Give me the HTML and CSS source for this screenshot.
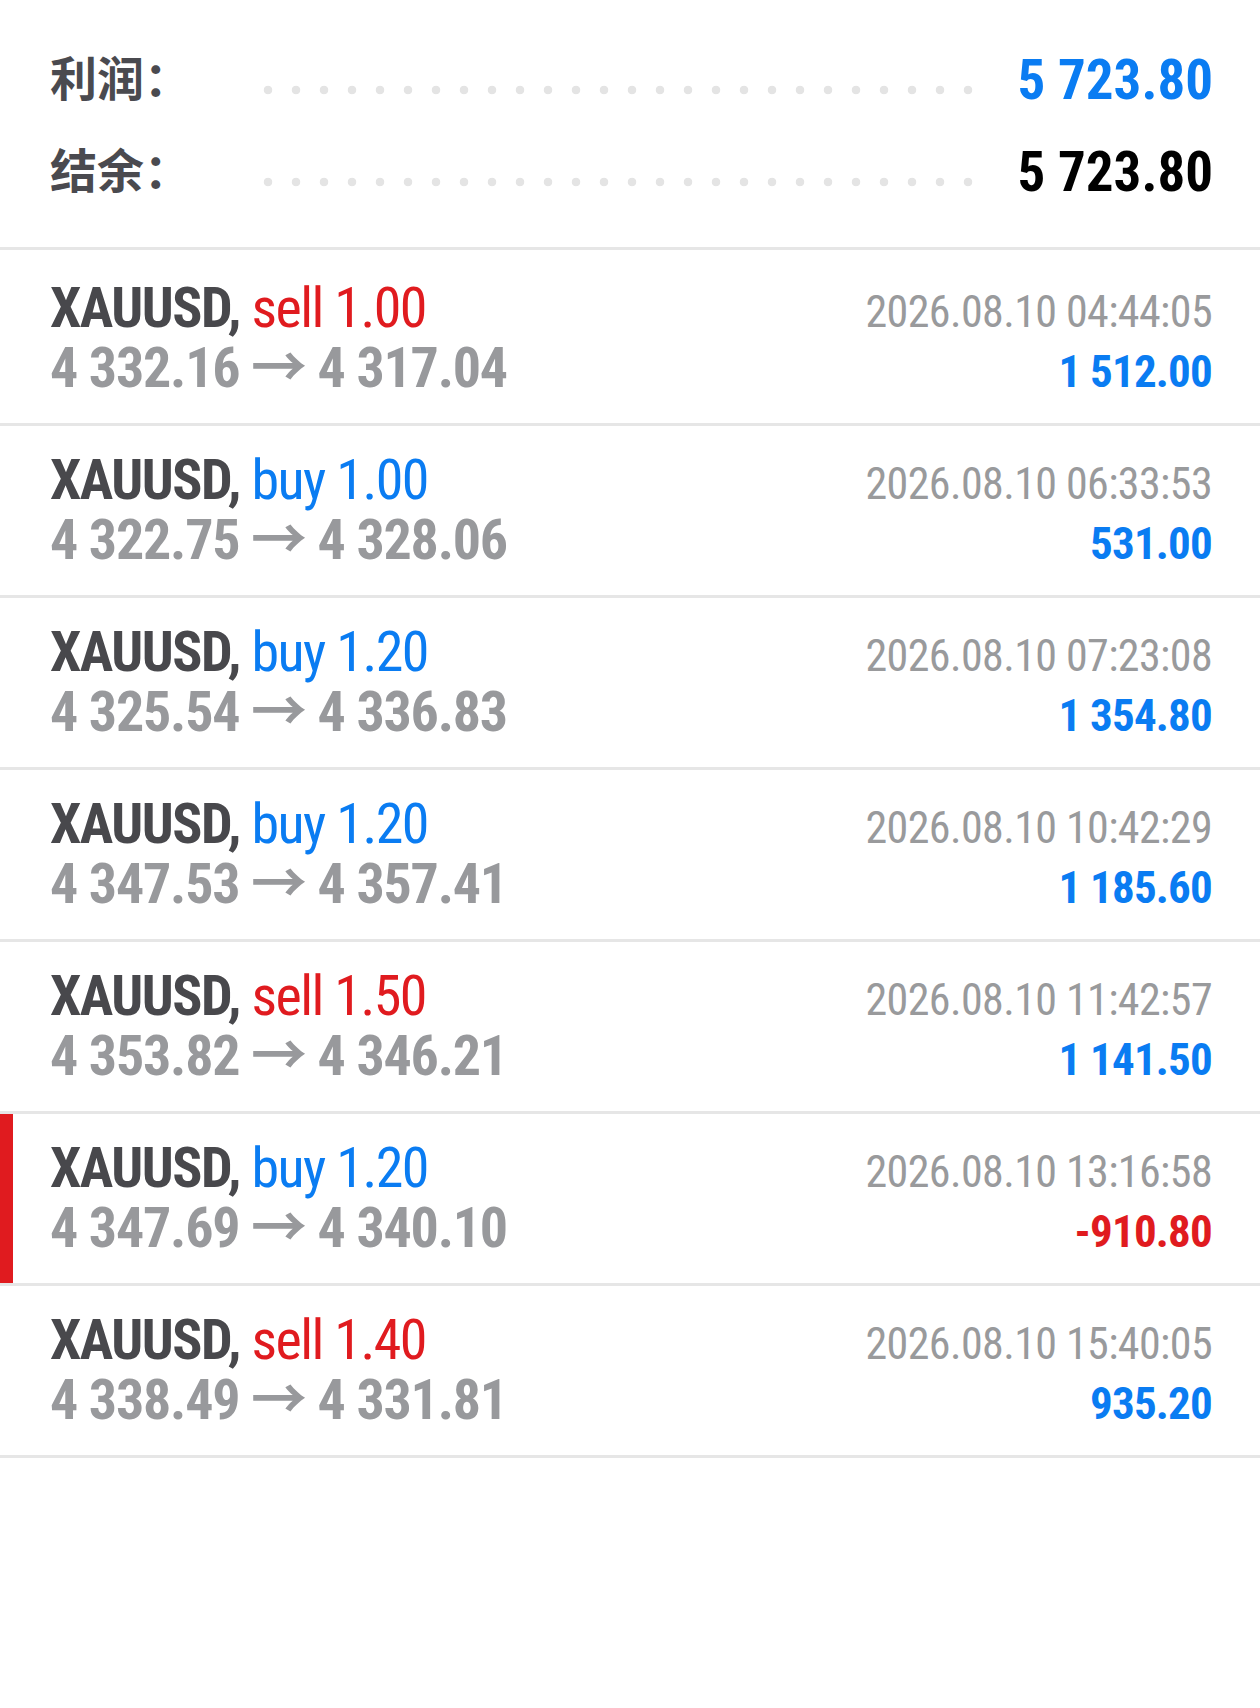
FILE: index.html
```html
<!DOCTYPE html>
<html lang="zh-CN">
<head>
<meta charset="UTF-8" />
<meta name="viewport" content="width=device-width, initial-scale=1.0" />
<title>历史</title>
<link rel="stylesheet" href="styles.css">
</head>
<body>

<!-- Итоги -->
<section class="summary">
  <div class="sum-row">
    <span class="sum-label">利润：</span>
    <span class="sum-dots"></span>
    <span class="sum-value blue">5 723.80</span>
  </div>
  <div class="sum-row">
    <span class="sum-label">结余：</span>
    <span class="sum-dots"></span>
    <span class="sum-value">5 723.80</span>
  </div>
</section>

<!-- Сделки -->
<ul class="deals">
  <li class="deal">
    <div class="deal-line">
      <span class="deal-title">XAUUSD, <span class="sell">sell 1.00</span></span>
      <span class="deal-time">2026.08.10 04:44:05</span>
    </div>
    <div class="deal-line">
      <span class="deal-prices">4 332.16 → 4 317.04</span>
      <span class="deal-profit blue">1 512.00</span>
    </div>
  </li>
  <li class="deal">
    <div class="deal-line">
      <span class="deal-title">XAUUSD, <span class="buy">buy 1.00</span></span>
      <span class="deal-time">2026.08.10 06:33:53</span>
    </div>
    <div class="deal-line">
      <span class="deal-prices">4 322.75 → 4 328.06</span>
      <span class="deal-profit blue">531.00</span>
    </div>
  </li>
  <li class="deal">
    <div class="deal-line">
      <span class="deal-title">XAUUSD, <span class="buy">buy 1.20</span></span>
      <span class="deal-time">2026.08.10 07:23:08</span>
    </div>
    <div class="deal-line">
      <span class="deal-prices">4 325.54 → 4 336.83</span>
      <span class="deal-profit blue">1 354.80</span>
    </div>
  </li>
  <li class="deal">
    <div class="deal-line">
      <span class="deal-title">XAUUSD, <span class="buy">buy 1.20</span></span>
      <span class="deal-time">2026.08.10 10:42:29</span>
    </div>
    <div class="deal-line">
      <span class="deal-prices">4 347.53 → 4 357.41</span>
      <span class="deal-profit blue">1 185.60</span>
    </div>
  </li>
  <li class="deal">
    <div class="deal-line">
      <span class="deal-title">XAUUSD, <span class="sell">sell 1.50</span></span>
      <span class="deal-time">2026.08.10 11:42:57</span>
    </div>
    <div class="deal-line">
      <span class="deal-prices">4 353.82 → 4 346.21</span>
      <span class="deal-profit blue">1 141.50</span>
    </div>
  </li>
  <li class="deal loss">
    <div class="deal-line">
      <span class="deal-title">XAUUSD, <span class="buy">buy 1.20</span></span>
      <span class="deal-time">2026.08.10 13:16:58</span>
    </div>
    <div class="deal-line">
      <span class="deal-prices">4 347.69 → 4 340.10</span>
      <span class="deal-profit red">-910.80</span>
    </div>
  </li>
  <li class="deal">
    <div class="deal-line">
      <span class="deal-title">XAUUSD, <span class="sell">sell 1.40</span></span>
      <span class="deal-time">2026.08.10 15:40:05</span>
    </div>
    <div class="deal-line">
      <span class="deal-prices">4 338.49 → 4 331.81</span>
      <span class="deal-profit blue">935.20</span>
    </div>
  </li>
</ul>

</body>
</html>
```

FILE: styles.css
```css
/* Общие стили */
body {
  margin: 0;
  background: #fff;
  font-family: "Roboto Condensed", "Liberation Sans Narrow", Roboto, "Noto Sans CJK SC", sans-serif;
  color: #48484c;
}

.blue { color: #0a7cf2; }
.red { color: #e01b1f; }

/* Итоги */
.summary {
  padding: 31px 47px 32px 50px;
}
.sum-row {
  display: flex;
  align-items: center;
  height: 92px;
}
.sum-label {
  width: 204px;
  margin-top: -4px;
  font-family: "Noto Sans CJK SC", sans-serif;
  font-weight: 700;
  font-size: 47px;
  color: #4a4a4f;
}
.sum-dots {
  width: 728px;
  height: 30px;
  align-self: flex-end;
  margin-bottom: 18px;
  background-image: radial-gradient(circle, #e4e4e4 4px, transparent 4.6px);
  background-size: 28px 30px;
  background-repeat: repeat-x;
}
.sum-value {
  margin-left: auto;
  margin-top: 6px;
  font-size: 55px;
  font-weight: 700;
  color: #000;
}
.sum-value.blue { color: #0a7cf2; }

/* Список сделок */
.deals {
  list-style: none;
  margin: 0;
  padding: 0;
  border-top: 3px solid #e6e6e6;
}
.deal {
  padding: 24px 48px 25px 50px;
  border-bottom: 3px solid #e6e6e6;
}
.deal:first-child {
  padding-top: 28px;
}
.deal.loss {
  box-shadow: inset 13px 0 0 #e01b1f;
}
.deal-line {
  display: flex;
  justify-content: space-between;
  align-items: baseline;
  height: 60px;
  line-height: 60px;
}
.deal-title {
  font-size: 56px;
  font-weight: 700;
  letter-spacing: -1.5px;
  color: #48484c;
}
.sell, .buy {
  font-weight: 400;
}
.sell { color: #e01b1f; }
.buy { color: #0a7cf2; }
.deal-time {
  font-size: 44px;
  letter-spacing: -0.6px;
  color: #999a9c;
}
.deal-prices {
  font-size: 56px;
  font-weight: 700;
  letter-spacing: -1.2px;
  color: #98999c;
}
.deal-profit {
  font-size: 45px;
  font-weight: 700;
  letter-spacing: -0.8px;
}
```
